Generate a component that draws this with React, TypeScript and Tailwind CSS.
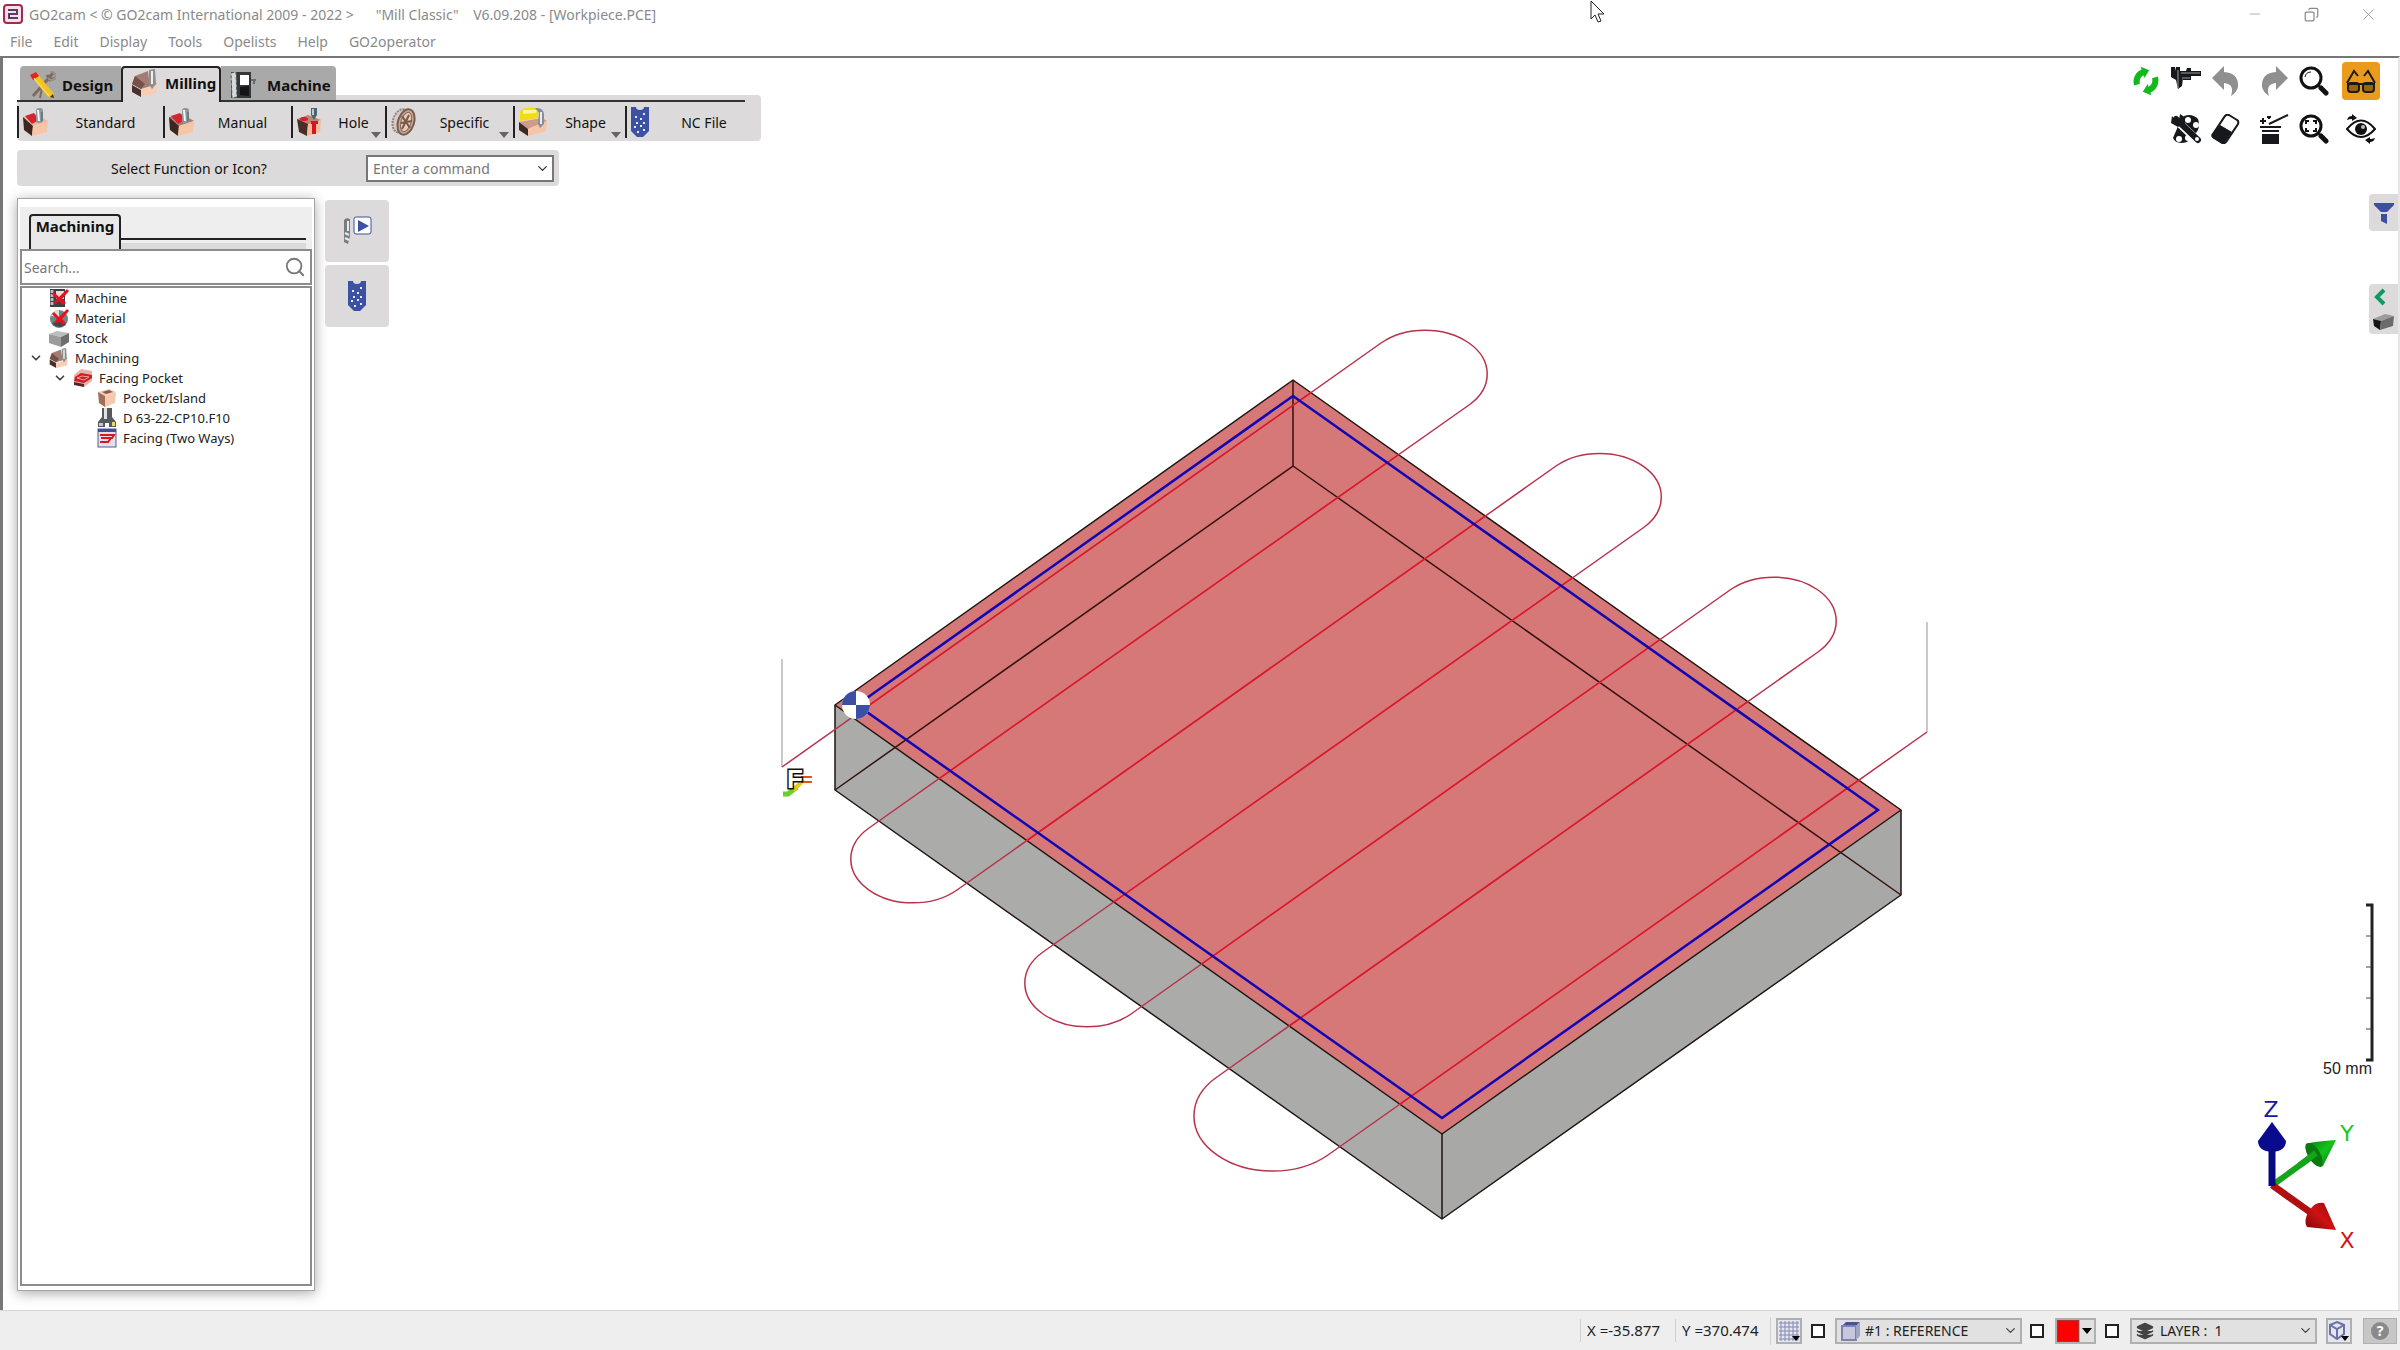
import type { ReactNode } from 'react';
import { ChevronDown, Copy, Layers, Minus, Search, X } from 'lucide-react';

const menus = ['File', 'Edit', 'Display', 'Tools', 'Opelists', 'Help', 'GO2operator'];

const toolpath =
  'M782 767 L1381 343 A61 43 0 0 1 1469 405 L869 828 A61 43 0 0 0 957 890 L1556 466 A61 43 0 0 1 1643 528 ' +
  'L1043 952 A61 43 0 0 0 1131 1014 L1730 590 A61 43 0 0 1 1818 652 L1217 1077 A77 54 0 0 0 1328 1155 L1927 732';

function BlockIcon({ top = '#e8b8a0', pocket = '#d8232f' }: { top?: string; pocket?: string }) {
  return (
    <svg width="28" height="28" viewBox="0 0 28 28" aria-hidden="true">
      <path d="M1 9 L14 6 L26 13 L11 18 Z" fill={top} />
      <path d="M1 9 L11 18 L10 28 L2 22 Z" fill="#3d2622" />
      <path d="M11 18 L26 13 L25 24 L10 28 Z" fill="#f7c5a6" />
      <path d="M3 8 L12 5 L17 12 L10 16 Z" fill={pocket} />
      <rect x="14" y="0" width="7" height="15" rx="3" fill="#8d979b" />
      <path d="M16 2 L17 13" stroke="#f3f6f7" strokeWidth="2" />
      <path d="M20 4 L20 13" stroke="#566064" strokeWidth="1" />
    </svg>
  );
}

function MillingIcon({ size = 28 }: { size?: number }) {
  return (
    <svg width={size} height={size} viewBox="0 0 28 28" aria-hidden="true">
      <path d="M4 7 L17 2 L18 10 L26 15 L10 20 L1 15 Z" fill="#a37d74" />
      <path d="M4 7 L14 15 L10 20 L1 15 Z" fill="#76514b" />
      <path d="M1 16 L10 21 L10 28 L1 23 Z" fill="#4a302c" />
      <path d="M10 21 L26 16 L25 24 L10 28 Z" fill="#f8cdb2" />
      <path d="M18 1 L24 0 L25 15 L21 20 L18 15 Z" fill="#8c8f90" />
      <path d="M21 2 L21 15" stroke="#eef0f0" strokeWidth="2" />
    </svg>
  );
}

function HoleIcon() {
  return (
    <svg width="28" height="28" viewBox="0 0 28 28" aria-hidden="true">
      <path d="M1 11 L12 7 L25 12 L12 17 Z" fill="#b98778" />
      <path d="M1 11 L12 16 L11 28 L3 24 Z" fill="#4a2c28" />
      <path d="M12 16 L25 12 L24 24 L11 28 Z" fill="#f5bb9e" />
      <ellipse cx="8" cy="11" rx="4" ry="2" fill="#d61f2a" />
      <path d="M15 13 H22 V16 H20 V26 H16 V16 H15 Z" fill="#d8141f" />
      <path d="M15 0 H21 V7 L18 12 L15 7 Z" fill="#4d6470" />
      <path d="M17 1 V7" stroke="#b9ced6" strokeWidth="2" />
    </svg>
  );
}

function SpecificIcon() {
  return (
    <svg width="28" height="30" viewBox="0 0 28 30" aria-hidden="true">
      <ellipse cx="11" cy="14" rx="8" ry="12" transform="rotate(18 11 14)" fill="#d9cbc4" stroke="#94827a" strokeWidth="2" strokeDasharray="2 1" />
      <ellipse cx="16" cy="15" rx="8" ry="13" transform="rotate(18 16 15)" fill="#c9a996" stroke="#765c50" strokeWidth="2" />
      <ellipse cx="16" cy="15" rx="5" ry="10" transform="rotate(18 16 15)" fill="#e4cdbf" stroke="#8a6858" />
      <path d="M12 9 L20 21 M19 8 L12 22 M11 16 L22 14" stroke="#7b5747" strokeWidth="2" />
    </svg>
  );
}

function ShapeIcon() {
  return (
    <svg width="30" height="30" viewBox="0 0 30 30" aria-hidden="true">
      <path d="M1 15 L24 11 L29 14 L10 22 Z" fill="#cf9a87" />
      <path d="M1 15 L10 22 L10 29 L1 23 Z" fill="#3c2724" />
      <path d="M10 22 L29 14 L28 24 L10 29 Z" fill="#f7c4aa" />
      <path d="M2 5 Q4 1 8 1 L21 1 L20 11 L2 14 Z" fill="#f2dd12" />
      <path d="M5 3 L19 3 L18 6 L5 7 Z" fill="#fdf6a0" />
      <path d="M17 1 Q26 0 26 8 L26 17 L22 21 L20 17 L21 6 Z" fill="#858e98" />
      <path d="M23 5 V17" stroke="#e6ebf0" strokeWidth="2" />
    </svg>
  );
}

function NcIcon() {
  return (
    <svg width="20" height="30" viewBox="0 0 20 30" aria-hidden="true">
      <path d="M1 0 H6 A4 3 0 0 0 14 0 H19 V24 L13 30 H7 L1 24 Z" fill="#3d51a4" />
      <path
        d="M5 9 h2 v2 h-2z M13 6 h2 v2 h-2z M10 11 h2 v2 h-2z M6 15 h2 v2 h-2z M13 15 h2 v2 h-2z M10 18 h2 v2 h-2z M4 19 h2 v2 h-2z M13 22 h2 v2 h-2z M7 24 h2 v2 h-2z"
        fill="#e9ecf7"
      />
    </svg>
  );
}

function DesignIcon() {
  return (
    <svg width="28" height="28" viewBox="0 0 28 28" aria-hidden="true">
      <path d="M25 2 L20 8 L5 25 M19 4 L22 9 L27 7" stroke="#7d6a60" strokeWidth="3" fill="none" />
      <path d="M22 1 A4 4 0 1 1 20 7" stroke="#a08f85" strokeWidth="2" fill="none" />
      <path d="M14 17 L12 27 M18 22 L24 26" stroke="#80695c" strokeWidth="2" />
      <path d="M2 4 L8 1 L26 23 L25 27 L20 26 Z" fill="#f3c321" />
      <path d="M2 4 L8 1 L11 5 L5 9 Z" fill="#d82a20" />
      <path d="M6 7 L21 25" stroke="#fae48a" strokeWidth="1" />
      <path d="M22 26 L26 27 L25 23 Z" fill="#333" />
    </svg>
  );
}

function MachineIcon() {
  return (
    <svg width="28" height="28" viewBox="0 0 28 28" aria-hidden="true">
      <rect x="2" y="1" width="20" height="26" fill="#34383a" />
      <path d="M2 2 L7 1 L8 26 L3 27 Z" fill="#d6d9da" stroke="#55595a" strokeDasharray="3 2" />
      <rect x="11" y="4" width="9" height="10" fill="#fff" />
      <path d="M11 16 L20 15 V25 L11 24 Z" fill="#121415" />
      <path d="M22 9 H27 M25 9 V13" stroke="#666b6d" strokeWidth="2" />
    </svg>
  );
}

function MissingMark() {
  return <path d="M5 4 L10 9 L18 1 L20 3 L13 11 L17 15 L14 17 L10 13 L7 16 L5 14 L8 11 L3 6 Z" fill="#e8101c" />;
}

function TreeMachine() {
  return (
    <svg width="20" height="20" viewBox="0 0 20 20" aria-hidden="true">
      <rect x="1" y="1" width="15" height="18" fill="#3d3f42" />
      <rect x="7" y="3" width="8" height="8" fill="#f3dada" />
      <path d="M3 2 V18" stroke="#b8bbbd" strokeWidth="3" strokeDasharray="3 1" />
      <MissingMark />
    </svg>
  );
}

function TreeMaterial() {
  return (
    <svg width="20" height="20" viewBox="0 0 20 20" aria-hidden="true">
      <circle cx="10" cy="11" r="9" fill="#6f8784" />
      <path d="M2 8 A9 9 0 0 1 10 2 L10 9 Z" fill="#d6e2e0" />
      <path d="M3 15 A9 9 0 0 0 17 16 L10 13 Z" fill="#3b4a48" />
      <MissingMark />
    </svg>
  );
}

function TreeStock() {
  return (
    <svg width="20" height="20" viewBox="0 0 20 20" aria-hidden="true">
      <path d="M0 6 L8 3 L20 5 L12 9 Z" fill="#bdbdbd" />
      <path d="M0 6 L12 9 L12 19 L0 15 Z" fill="#9b9b9b" />
      <path d="M12 9 L20 5 L20 14 L12 19 Z" fill="#6e6e6e" />
    </svg>
  );
}

function TreeFacing() {
  return (
    <svg width="20" height="20" viewBox="0 0 20 20" aria-hidden="true">
      <path d="M1 7 L8 1 L19 3 L19 13 L11 19 L1 14 Z" fill="#e9b3a4" />
      <path d="M2 9 L8 5 L19 7 L19 10 L11 15 L1 13 Z" fill="#c91f26" />
      <path d="M4 10 L9 8 L16 9 L11 12 Z" fill="none" stroke="#f3a49b" />
      <path d="M1 14 L11 16 L11 19 L1 17 Z" fill="#5a2220" />
    </svg>
  );
}

function TreePocket() {
  return (
    <svg width="20" height="20" viewBox="0 0 20 20" aria-hidden="true">
      <path d="M1 4 L12 1 L19 4 L8 8 Z" fill="#efcdb9" />
      <path d="M5 4 L12 2 L16 4 L9 6 Z" fill="#8b5b45" />
      <path d="M1 4 L8 8 L8 19 L2 15 Z" fill="#a06d57" />
      <path d="M8 8 L19 4 L18 15 L8 19 Z" fill="#f6c9ae" />
    </svg>
  );
}

function TreeTool() {
  return (
    <svg width="20" height="20" viewBox="0 0 20 20" aria-hidden="true">
      <path d="M5 0 H15 V9 L19 14 V19 H12 V15 H8 V19 H1 V14 L5 9 Z" fill="#565a5c" />
      <path d="M7 0 H10 V11 H7 Z" fill="#dfe3e4" />
      <path d="M2 15 H6 V18 H2 Z" fill="#c4c8ca" />
      <path d="M15 14 H18 V18 H15 Z" fill="#e9dc5a" />
    </svg>
  );
}

function TreeTwoWays() {
  return (
    <svg width="20" height="20" viewBox="0 0 20 20" aria-hidden="true">
      <rect x="1" y="1" width="18" height="18" fill="#dfe2ee" stroke="#555c80" />
      <rect x="1" y="1" width="18" height="3" fill="#3c4fa0" />
      <path d="M3 7 H17 L15 10 H4 M4 10 H14 L11 14 H3" stroke="#e01420" strokeWidth="2" fill="none" />
    </svg>
  );
}

type TreeRow = { label: string; icon: ReactNode; pad: string; open?: boolean };

const tree: TreeRow[] = [
  { label: 'Machine', icon: <TreeMachine />, pad: 'pl-[7px]' },
  { label: 'Material', icon: <TreeMaterial />, pad: 'pl-[7px]' },
  { label: 'Stock', icon: <TreeStock />, pad: 'pl-[7px]' },
  { label: 'Machining', icon: <MillingIcon size={20} />, pad: 'pl-[7px]', open: true },
  { label: 'Facing Pocket', icon: <TreeFacing />, pad: 'pl-[31px]', open: true },
  { label: 'Pocket/Island', icon: <TreePocket />, pad: 'pl-[55px]' },
  { label: 'D 63-22-CP10.F10', icon: <TreeTool />, pad: 'pl-[55px]' },
  { label: 'Facing (Two Ways)', icon: <TreeTwoWays />, pad: 'pl-[55px]' },
];

const tools = [
  { label: 'Standard', icon: <BlockIcon />, width: 'w-[146px]' },
  { label: 'Manual', icon: <BlockIcon top="#a88070" />, width: 'w-[128px]' },
  { label: 'Hole', icon: <HoleIcon />, width: 'w-[94px]', more: true },
  { label: 'Specific', icon: <SpecificIcon />, width: 'w-[128px]', more: true },
  { label: 'Shape', icon: <ShapeIcon />, width: 'w-[112px]', more: true },
  { label: 'NC File', icon: <NcIcon />, width: 'w-[135px]' },
];

function Icon30({ children }: { children: ReactNode }) {
  return (
    <svg width="30" height="30" viewBox="0 0 30 30" fill="none" aria-hidden="true">
      {children}
    </svg>
  );
}

const viewTools = [
  {
    label: 'Refresh',
    icon: (
      <Icon30>
        <path d="M2 16 A13 13 0 0 1 14 3 V0 L21 6 L14 12 V9 A8 8 0 0 0 8 16 Z" fill="#12b91c" transform="rotate(-18 14 14)" />
        <path d="M28 14 A13 13 0 0 1 16 27 V30 L9 24 L16 18 V21 A8 8 0 0 0 22 14 Z" fill="#12b91c" transform="rotate(-18 16 16)" />
      </Icon30>
    ),
  },
  {
    label: 'Measure',
    icon: (
      <Icon30>
        <path d="M0 1 H4 L5 5 V1 H9 V5 H15 L16 2 H20 V5 H30 V10 H20 V14 H12 V12 L11 20 L7 23 L5 14 L0 11 Z" fill="#16181b" />
        <path d="M7 4 V22 M10 7 H29 M11 12 H19" stroke="#9a9c9e" />
      </Icon30>
    ),
  },
  { label: 'Undo', icon: <Icon30><path d="M1 12 L13 0 V6 Q28 7 27 21 Q26 26 20 30 Q24 18 13 17 V24 Z" fill="#8f8f8f" /></Icon30> },
  { label: 'Redo', icon: <Icon30><path d="M29 12 L17 0 V6 Q2 7 3 21 Q4 26 10 30 Q6 18 17 17 V24 Z" fill="#8f8f8f" /></Icon30> },
  {
    label: 'Zoom',
    icon: (
      <Icon30>
        <circle cx="12" cy="12" r="10" stroke="#111" strokeWidth="3" />
        <path d="M6 11 Q7 6 12 6" stroke="#111" strokeWidth="1" />
        <path d="M19 19 L23 23" stroke="#111" strokeWidth="2" />
        <path d="M22 22 L27 27" stroke="#111" strokeWidth="5" strokeLinecap="round" />
      </Icon30>
    ),
  },
  {
    label: 'Glasses',
    icon: (
      <Icon30>
        <path d="M1 17 L8 5 L12 10 M29 17 L22 5 L18 10" stroke="#1a1a1a" strokeWidth="2" />
        <rect x="2" y="17" width="11" height="9" rx="3" fill="#9a6314" stroke="#1a1a1a" strokeWidth="2" />
        <rect x="17" y="17" width="11" height="9" rx="3" fill="#9a6314" stroke="#1a1a1a" strokeWidth="2" />
        <path d="M1 18 H29" stroke="#1a1a1a" strokeWidth="2" />
      </Icon30>
    ),
  },
  {
    label: 'Settings',
    icon: (
      <Icon30>
        <path d="M11 3 Q20 -2 27 5 Q30 14 24 20 L16 28 Q5 31 2 24 Q8 10 11 3 Z" fill="#16181b" />
        <g fill="#fff">
          <circle cx="17" cy="6" r="3" />
          <circle cx="25" cy="11" r="3" />
          <circle cx="8" cy="25" r="3" />
          <circle cx="17" cy="24" r="3" />
        </g>
        <path d="M5 6 L26 26" stroke="#fff" strokeWidth="8" />
        <path d="M5 5 L27 26" stroke="#16181b" strokeWidth="6" strokeLinecap="round" />
        <path d="M1 2 L0 9 L7 13 L14 9 L12 2 L9 0 L8 6 L4 6 Z" fill="#16181b" />
        <circle cx="26" cy="25" r="2" fill="#fff" />
      </Icon30>
    ),
  },
  {
    label: 'Erase',
    icon: (
      <Icon30>
        <path d="M14 2 Q16 0 18 1 L26 6 Q28 7 27 10 L15 28 Q13 30 11 29 L3 24 Q0 22 2 20 Z" fill="#fff" stroke="#16181b" strokeWidth="2" />
        <path d="M9 11 L21 18 L14 28 Q13 30 11 29 L3 24 Q0 22 2 20 Z" fill="#16181b" />
      </Icon30>
    ),
  },
  {
    label: 'Magic clean',
    icon: (
      <Icon30>
        <path d="M1 12 H22 V14 H1 Z M3 16 H20 V18 H3 Z M3 20 H20 V30 H3 Z" fill="#16181b" />
        <path d="M10 10 L29 1" stroke="#16181b" strokeWidth="2" />
        <path d="M4 4 V10 M1 7 H7 M10 2 V5 M8 3 H12" stroke="#16181b" strokeWidth="2" />
      </Icon30>
    ),
  },
  {
    label: 'Zoom to fit',
    icon: (
      <Icon30>
        <circle cx="12" cy="12" r="10" stroke="#111" strokeWidth="3" />
        <path d="M7 10 V7 H10 M14 7 H17 V10 M17 14 V17 H14 M10 17 H7 V14" stroke="#111" strokeWidth="2" />
        <path d="M19 19 L23 23" stroke="#111" strokeWidth="2" />
        <path d="M22 22 L27 27" stroke="#111" strokeWidth="5" strokeLinecap="round" />
      </Icon30>
    ),
  },
  {
    label: 'View',
    icon: (
      <Icon30>
        <path d="M1 15 Q15 -2 29 15 Q15 31 1 15 Z" stroke="#111" strokeWidth="2" />
        <circle cx="15" cy="15" r="6" fill="#111" />
        <circle cx="17" cy="13" r="2" fill="#bbb" />
        <path d="M1 6 Q2 2 6 2 V0 L11 4 L6 7 V5 Q3 5 1 6 Z M29 24 Q28 28 24 28 V30 L19 26 L24 23 V25 Q27 25 29 24 Z" fill="#111" />
      </Icon30>
    ),
  },
];

function ToolButton({ index, className = '' }: { index: number; className?: string }) {
  const tool = viewTools[index];
  return (
    <button type="button" aria-label={tool.label} className={`flex h-[38px] w-[38px] items-center justify-center ${className}`}>
      {tool.icon}
    </button>
  );
}

function Viewport() {
  return (
    <svg className="absolute inset-0 h-full w-full" viewBox="3 58 2395 1252" role="img" aria-label="Workpiece">
      <defs>
        <clipPath id="top-face">
          <path d="M1293 380 L1901 810 L1442 1134 L835 705 Z" />
        </clipPath>
        <linearGradient id="y-cone" x1="0" y1="0" x2="1" y2="1">
          <stop offset="0" stopColor="#0a7a10" />
          <stop offset="0.5" stopColor="#13c41b" />
          <stop offset="1" stopColor="#0b6d10" />
        </linearGradient>
        <linearGradient id="x-cone" x1="1" y1="0" x2="0" y2="1">
          <stop offset="0" stopColor="#8d0c0c" />
          <stop offset="0.5" stopColor="#cf1212" />
          <stop offset="1" stopColor="#7c0808" />
        </linearGradient>
      </defs>

      {/* stock */}
      <path d="M835 705 L1442 1134 V1219 L835 790 Z" fill="#ababaa" />
      <path d="M1442 1134 L1901 810 V895 L1442 1219 Z" fill="#a8a9a6" />
      <path d="M1293 380 L1901 810 L1442 1134 L835 705 Z" fill="#d67878" />
      <g fill="none" stroke="#1f1512" strokeWidth="1.5" strokeLinejoin="round">
        <path d="M1293 380 L1901 810 L1442 1134 L835 705 Z" />
        <path d="M835 705 V790 L1442 1219 L1901 895 V810 M1442 1134 V1219" />
      </g>
      <path d="M1293 380 V466 L835 790 M1293 466 L1901 895" fill="none" stroke="#34120f" strokeWidth="1.5" />

      {/* toolpath */}
      <path d="M782 659 V767 M1927 622 V732" stroke="#c9c9cc" strokeWidth="2" />
      <path d={toolpath} fill="none" stroke="#b8324a" strokeWidth="1.5" />
      <path d={toolpath} fill="none" stroke="#e0182a" strokeWidth="1.5" clipPath="url(#top-face)" />
      <path d="M857 705 L1293 396 L1878 810 L1442 1118 Z" fill="none" stroke="#1206b4" strokeWidth="2.5" />

      {/* origin */}
      <circle cx="856" cy="705" r="14" fill="#fff" />
      <path d="M856 705 H842 A14 14 0 0 1 856 691 Z M856 705 H870 A14 14 0 0 1 856 719 Z" fill="#3b4fa3" />

      {/* feed start */}
      <path d="M783 794 H788 L797 787" stroke="#6cd02c" strokeWidth="5" fill="none" />
      <path d="M793 790 L804 780" stroke="#f0c814" strokeWidth="4" />
      <path d="M801 777 H812 M801 782 H812" stroke="#e0541c" strokeWidth="2" />
      <text x="787" y="788" fill="#fff" stroke="#111" strokeWidth="3" paintOrder="stroke" className="font-['Liberation_Sans',sans-serif] text-[26px] font-bold">F</text>

      {/* scale */}
      <path d="M2366 905 H2372 V1060 H2366" fill="none" stroke="#222" strokeWidth="3" />
      <path d="M2366 936 H2371 M2366 967 H2371 M2366 998 H2371 M2366 1029 H2371" stroke="#444" strokeWidth="1" />
      <text x="2372" y="1074" textAnchor="end" fill="#222" className="font-['Liberation_Sans',sans-serif] text-[16px]">50 mm</text>

      {/* axes */}
      <path d="M2274 1184 L2314 1155" stroke="#14a51b" strokeWidth="6" />
      <path d="M2306 1144 Q2310 1142 2336 1140 L2323 1166 Q2318 1169 2311 1160 Q2304 1150 2306 1144 Z" fill="url(#y-cone)" />
      <path d="M2306 1144 Q2312 1140 2319 1151 Q2325 1161 2321 1167 Q2314 1167 2308 1156 Q2304 1148 2306 1144 Z" fill="#0a7a10" />
      <path d="M2300 1165 L2316 1153" stroke="#14a51b" strokeWidth="6" />
      <path d="M2272 1185 L2310 1212" stroke="#b01010" strokeWidth="7" />
      <path d="M2336 1230 L2307 1227 Q2303 1221 2309 1211 Q2315 1201 2324 1203 Z" fill="url(#x-cone)" />
      <path d="M2272 1186 V1148" stroke="#0a0a80" strokeWidth="7" />
      <path d="M2272 1122 L2286 1141 Q2286 1151 2272 1152 Q2258 1151 2258 1141 Z" fill="#0a0a8c" />
      <g textAnchor="middle" className="font-['DejaVu_Sans',sans-serif] text-[22px]">
        <text x="2271" y="1117" fill="#1414a8">Z</text>
        <text x="2347" y="1141" fill="#17c81f">Y</text>
        <text x="2347" y="1248" fill="#d01414">X</text>
      </g>
    </svg>
  );
}

function Ribbon() {
  return (
    <div className="w-[744px]">
      <div className="flex h-9 items-end text-[15px] font-bold" role="tablist">
        <div className="w-[3px] self-stretch border-b-2 border-[#333]" />
        <button type="button" role="tab" className="flex h-9 w-[101px] items-center gap-[6px] rounded-tl border-b-2 border-[#333] bg-[#a9a9a9] pt-1 pl-2">
          <DesignIcon />
          Design
        </button>
        <button type="button" role="tab" aria-selected="true" className="flex h-9 w-[100px] items-center gap-[6px] rounded-t border-2 border-b-0 border-[#222] bg-[#dcdada] pb-1 pl-2">
          <MillingIcon />
          Milling
        </button>
        <button type="button" role="tab" className="flex h-9 w-[115px] items-center gap-[10px] rounded-tr border-b-2 border-[#333] bg-[#a9a9a9] pt-1 pl-2">
          <MachineIcon />
          Machine
        </button>
        <div className="h-[7px] flex-1 border-b-2 border-[#333] bg-[#dcdada]" />
        <div className="h-[7px] w-4 rounded-tr bg-[#dcdada]" />
      </div>
      <div className="flex rounded-b bg-[#dcdada] pt-1 pb-[3px]">
        {tools.map((tool) => (
          <button key={tool.label} type="button" className={`relative flex h-8 items-center border-l-2 border-[#222] pl-[3px] text-[14px] ${tool.width}`}>
            {tool.icon}
            <span className="flex-1 pr-[2px] text-center">{tool.label}</span>
            {tool.more ? (
              <svg className="absolute right-1 bottom-0" width="10" height="6" viewBox="0 0 10 6" aria-hidden="true">
                <path d="M0 0 H10 L5 6 Z" fill="#666" />
              </svg>
            ) : null}
          </button>
        ))}
      </div>
    </div>
  );
}

function MachiningPanel() {
  return (
    <section className="flex w-[298px] flex-1 flex-col border border-[#a5a5a5] bg-white px-[2px] pt-2 pb-1 shadow-[0_2px_12px_rgba(0,0,0,0.35)]">
      <div className="flex bg-[#eeeeee] pt-[7px] pr-[6px] pl-[9px]">
        <h2 className="h-[35px] w-[92px] rounded-t border-2 border-b-0 border-[#222] bg-[#e8e8e8] text-center text-[15px] leading-5 font-bold">Machining</h2>
        <div className="flex flex-1 flex-col justify-end">
          <div className="border-b-2 border-[#222]" />
          <div className="h-[9px] border-t-3 border-[#eeeeee] bg-[#dadada]" />
        </div>
      </div>
      <label className="flex h-9 items-center border-2 border-[#8c8c8c] pr-1 pl-[2px]">
        <input type="text" placeholder="Search..." aria-label="Search" className="min-w-0 flex-1 text-[14px] outline-none placeholder:text-[#777]" />
        <Search size={22} className="text-[#777]" aria-hidden="true" />
      </label>
      <ul className="mt-[1px] flex-1 border-2 border-[#8c8c8c] text-[13px] leading-5 text-[#222]">
        {tree.map((row) => (
          <li key={row.label} className={`flex h-5 items-center ${row.pad}`}>
            <span className="w-5">{row.open ? <ChevronDown size={14} strokeWidth={3} className="text-[#444]" /> : null}</span>
            {row.icon}
            <span className="ml-[6px] whitespace-nowrap">{row.label}</span>
          </li>
        ))}
      </ul>
    </section>
  );
}

function StatusSelect({ label, value, icon }: { label: string; value: string; icon: ReactNode }) {
  return (
    <div className="relative flex h-[26px] w-[187px] items-center border-2 border-[#b0b0b0] bg-[#e1e1e1]">
      <span className="absolute left-1">{icon}</span>
      <select aria-label={label} className="h-full w-full appearance-none bg-transparent pl-7 text-[14px] outline-none">
        <option>{value}</option>
      </select>
      <ChevronDown size={15} className="pointer-events-none absolute right-[2px] text-[#444]" />
    </div>
  );
}

function StatusCheck({ label }: { label: string }) {
  return <input type="checkbox" aria-label={label} className="h-[14px] w-[14px] appearance-none border-2 border-[#222] bg-white" />;
}

function StatusBar() {
  return (
    <footer className="flex h-10 items-center justify-end border-t border-[#d5d5d5] bg-[#eeeeee] pr-[3px] text-[15px] text-[#222]">
      <span className="w-[95px] border-l border-[#d0d0d0] pl-[6px] whitespace-nowrap">X =-35.877</span>
      <span className="w-[95px] border-l border-[#d0d0d0] pl-[6px] whitespace-nowrap">Y =370.474</span>
      <span className="h-7 border-l border-[#d0d0d0]" />
      <button type="button" aria-label="Grid" className="mr-[9px] ml-[5px] border-2 border-[#b0b0b0] bg-[#e4e5ee]">
        <svg width="22" height="22" viewBox="0 0 22 22" aria-hidden="true">
          <path d="M1 3 H21 M1 7 H21 M1 11 H21 M1 15 H21 M1 19 H21 M3 1 V21 M7 1 V21 M11 1 V21 M15 1 V21 M19 1 V21" stroke="#8289b5" strokeWidth="1" />
          <path d="M14 16 H22 L18 21 Z" fill="#000" />
        </svg>
      </button>
      <StatusCheck label="Lock grid" />
      <span className="w-[10px]" />
      <StatusSelect
        label="Reference"
        value="#1 : REFERENCE"
        icon={
          <svg width="20" height="20" viewBox="0 0 20 20" aria-hidden="true">
            <path d="M1 5 L5 1 H19 L15 5 Z" fill="#4a5391" />
            <path d="M1 5 H15 V19 H1 Z" fill="#c5c8dc" stroke="#7c82ab" strokeWidth="2" />
            <path d="M15 5 L19 1 V15 L15 19 Z" fill="#a1a5c3" />
          </svg>
        }
      />
      <span className="w-2" />
      <StatusCheck label="Lock reference" />
      <span className="w-[11px]" />
      <button type="button" aria-label="Color" className="flex h-[26px] w-[41px] border-2 border-[#b0b0b0] bg-[#e1e1e1]">
        <span className="h-full w-[22px] border border-[#a33] bg-[#ff0000]" />
        <span className="flex h-full flex-1 items-center justify-center border-l border-[#b0b0b0]">
          <svg width="10" height="6" viewBox="0 0 10 6" aria-hidden="true"><path d="M0 0 H10 L5 6 Z" fill="#000" /></svg>
        </span>
      </button>
      <span className="w-[9px]" />
      <StatusCheck label="Lock color" />
      <span className="w-[11px]" />
      <StatusSelect label="Layer" value={'LAYER :\u00a0\u00a01'} icon={<Layers size={18} fill="#444" className="text-[#444]" />} />
      <button type="button" aria-label="Display mode" className="mr-[11px] ml-[9px] border-2 border-[#b0b0b0] bg-[#e4e5ee]">
        <svg width="22" height="22" viewBox="0 0 22 22" fill="none" aria-hidden="true">
          <path d="M9 2 L16 5 V14 L9 19 L2 14 V5 Z M2 5 L9 9 L16 5 M9 9 V19" stroke="#6b73a6" strokeWidth="2" />
          <path d="M13 16 H21 L17 21 Z" fill="#000" />
        </svg>
      </button>
      <button type="button" aria-label="Help" className="flex h-[26px] w-[34px] items-center justify-center border border-[#b0b0b0] bg-[#c6c6c6]">
        <span className="h-[18px] w-[18px] rounded-full bg-[#8a8a8a] text-center text-[14px] leading-[18px] font-bold text-white">?</span>
      </button>
    </footer>
  );
}

export default function App() {
  return (
    <div className="relative flex min-h-screen flex-col bg-white font-['Noto_Sans',sans-serif] text-[#111]">
      <header className="text-[14px] text-[#8a8a8a]">
        <div className="flex h-7 items-center pl-[3px]">
          <svg width="20" height="20" viewBox="0 0 20 20" fill="none" aria-hidden="true">
            <rect x="1" y="1" width="18" height="18" rx="3" fill="#f6dfe8" stroke="#a3294f" strokeWidth="2" />
            <path d="M5 6 H14 V10 H6 V14 H15" stroke="#5b3a63" strokeWidth="2" />
          </svg>
          <h1 className="ml-[6px] flex-1 whitespace-pre">{'GO2cam < © GO2cam International 2009 - 2022 >      "Mill Classic"    V6.09.208 - [Workpiece.PCE]'}</h1>
          <button type="button" aria-label="Minimize" className="mr-[41px]"><Minus size={16} strokeWidth={1} /></button>
          <button type="button" aria-label="Restore" className="mr-[40px] rotate-90"><Copy size={15} strokeWidth={2} /></button>
          <button type="button" aria-label="Close" className="mr-[22px]"><X size={19} strokeWidth={1} /></button>
        </div>
        <nav className="flex h-7 items-center gap-[21px] pb-[2px] pl-[10px]">
          {menus.map((menu) => (
            <button key={menu} type="button">{menu}</button>
          ))}
        </nav>
      </header>

      <main className="relative flex flex-1 justify-between border-t-2 border-r-2 border-l-3 border-t-[#777] border-r-[#e6e6e6] border-l-[#777]">
        <Viewport />
        <div className="relative flex flex-col pt-2 pb-[19px] pl-[14px]">
          <Ribbon />
          <div className="mt-[9px] flex h-9 w-[542px] items-center rounded bg-[#dcdada] pr-[5px]">
            <label htmlFor="command" className="flex-1 pr-[5px] text-center text-[14px]">Select Function or Icon?</label>
            <div className="relative flex h-[27px] w-[188px] items-center border-2 border-[#777] bg-white">
              <select id="command" className="h-full w-full appearance-none pl-[5px] text-[14px] text-[#777] outline-none">
                <option>Enter a command</option>
              </select>
              <ChevronDown size={15} className="pointer-events-none absolute right-[2px] text-[#333]" />
            </div>
          </div>
          <div className="mt-3 flex flex-1 gap-[10px]">
            <div className="flex flex-col">
              <MachiningPanel />
            </div>
            <div className="flex flex-col gap-[3px] pt-[2px]">
              <button type="button" aria-label="Simulate" className="flex h-[62px] w-16 items-center justify-center rounded-sm bg-[#dcdada]">
                <svg width="30" height="30" viewBox="0 0 30 30" aria-hidden="true">
                  <path d="M2 4 Q4 1 8 3 V20 L6 28 L2 26 Z" fill="#777d80" />
                  <path d="M6 5 V15 M3 17 L7 19 M3 22 L7 24" stroke="#e9eced" strokeWidth="2" />
                  <rect x="12" y="1" width="17" height="17" rx="2" fill="#fff" stroke="#3d51a4" />
                  <path d="M16 4 L27 10 L16 16 Z" fill="#3d51a4" />
                </svg>
              </button>
              <button type="button" aria-label="NC program" className="flex h-[62px] w-16 items-center justify-center rounded-sm bg-[#dcdada]">
                <NcIcon />
              </button>
            </div>
          </div>
        </div>

        <div className="relative flex flex-col items-end">
          <div className="mt-1 mr-[18px] grid grid-cols-[40px_40px_48px_40px_47px_38px] gap-y-[10px]">
            <ToolButton index={0} />
            <ToolButton index={1} />
            <ToolButton index={2} />
            <ToolButton index={3} />
            <ToolButton index={4} />
            <ToolButton index={5} className="rounded-sm bg-[#ea9a1c]" />
            <span />
            <ToolButton index={6} />
            <ToolButton index={7} />
            <ToolButton index={8} />
            <ToolButton index={9} />
            <ToolButton index={10} />
          </div>
          <button type="button" aria-label="Filter" className="mt-[46px] flex h-[37px] w-[29px] items-center justify-center rounded-l-sm bg-[#dcdada]">
            <svg width="20" height="22" viewBox="0 0 20 22" aria-hidden="true">
              <path d="M0 1 H20 V3 L13 10 H7 L0 3 Z M7 12 H13 V22 L7 19 Z" fill="#3d4fa3" />
            </svg>
          </button>
          <button type="button" aria-label="Expand" className="mt-[53px] flex h-[50px] w-[29px] flex-col items-start justify-between rounded-l-sm bg-[#dcdada] pt-1 pb-1 pl-1">
            <svg width="14" height="18" viewBox="0 0 14 18" fill="none" aria-hidden="true">
              <path d="M11 2 L4 9 L11 16" stroke="#109a68" strokeWidth="4" />
            </svg>
            <svg width="21" height="17" viewBox="0 0 21 17" aria-hidden="true">
              <path d="M0 6 L12 1 L21 3 L8 8 Z" fill="#9c9c9c" />
              <path d="M0 6 L8 8 L7 17 L1 13 Z" fill="#151515" />
              <path d="M8 8 L21 3 L20 13 L7 17 Z" fill="#6b6b6b" />
            </svg>
          </button>
        </div>
      </main>

      <StatusBar />

      <svg className="absolute top-0 left-[1590px]" width="16" height="24" viewBox="0 0 16 24" aria-hidden="true">
        <path d="M1 1 V19 L5 15 L8 22 L11 21 L8 14 H14 Z" fill="#fff" stroke="#222" />
      </svg>
    </div>
  );
}
